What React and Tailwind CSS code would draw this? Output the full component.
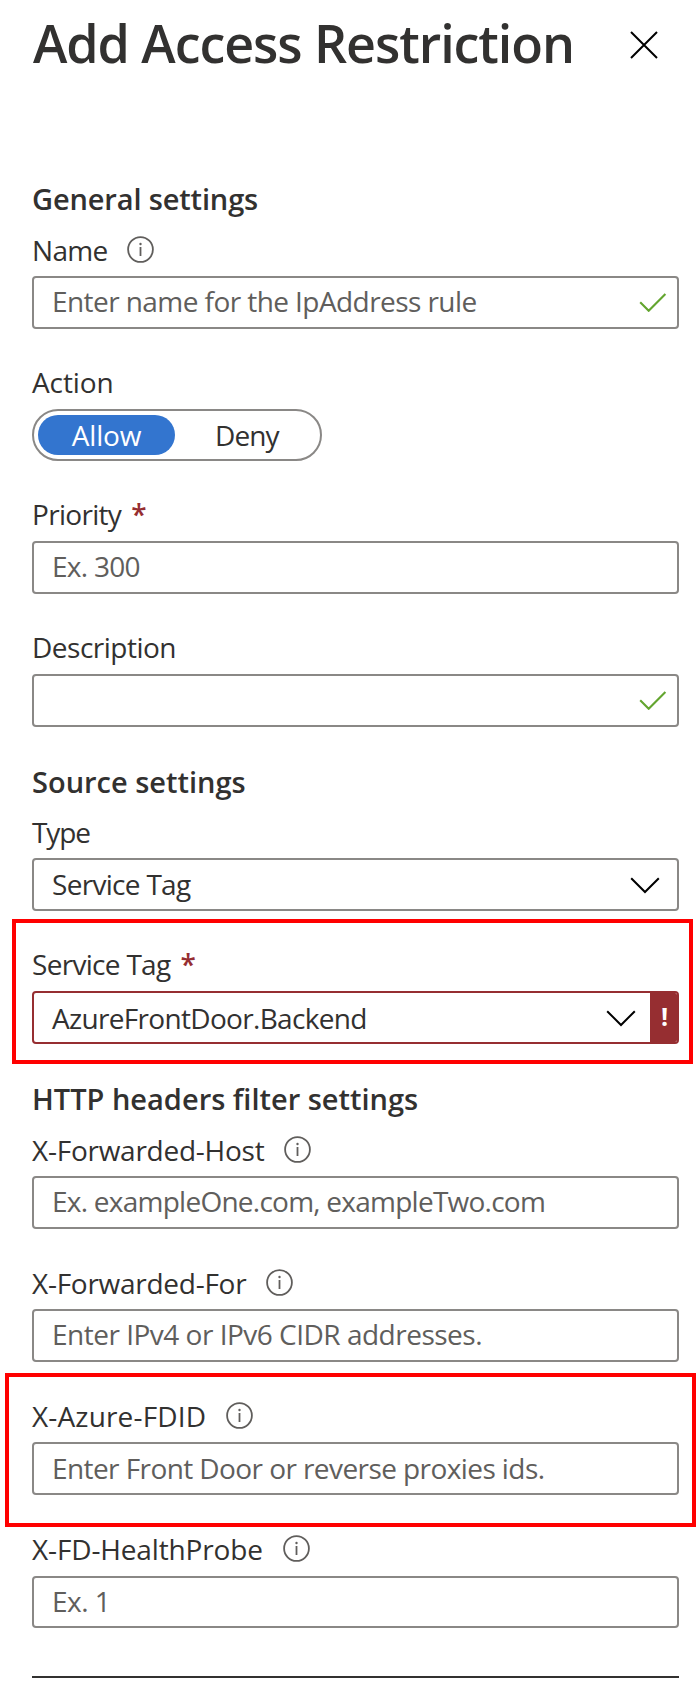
import React from "react";

function InfoIcon({ gap }) {
  return (
    <svg className={`mb-px h-[27px] w-[27px] shrink-0 ${gap}`} viewBox="0 0 27 27" fill="none">
      <circle cx="13.5" cy="13.5" r="12.4" stroke="#605e5c" strokeWidth="1.8" />
      <path d="M13.5 11v9" stroke="#605e5c" strokeWidth="1.8" />
      <circle cx="13.5" cy="8" r="1.2" fill="#605e5c" />
    </svg>
  );
}

function Check() {
  return (
    <svg className="mb-0.5 h-[20px] w-[28px] shrink-0" viewBox="0 0 28 20" fill="none">
      <path d="M1.2 10.3L9.7 18.8L26.4 2" stroke="#63a52f" strokeWidth="2.1" />
    </svg>
  );
}

function Chevron() {
  return (
    <svg className="h-[17px] w-[30px] shrink-0" viewBox="0 0 30 17" fill="none">
      <path d="M1.2 1.2L15 15L28.8 1.2" stroke="#000000" strokeWidth="2" />
    </svg>
  );
}

function Label({ children, spacing, required, info, gap = "ml-5" }) {
  return (
    <div className="flex h-10 items-center leading-10 whitespace-pre text-[#323130]">
      <span className={spacing}>{children}</span>
      {required && <span className="ml-[10px] font-semibold text-[#962e31]">*</span>}
      {info && <InfoIcon gap={gap} />}
    </div>
  );
}

function Heading({ children, spacing, className }) {
  return (
    <h2 className={`h-10 text-[29px] leading-[39px] font-semibold whitespace-pre text-[#323130] ${spacing} ${className}`}>{children}</h2>
  );
}

function Box({ children, spacing = "", value, className = "mt-1.5 h-[53px]", textClass = "pb-[3px]", end }) {
  return (
    <div className={`flex items-center justify-between rounded-[4px] border-2 border-[#8a8886] pl-[18px] ${className}`}>
      <span className={`leading-[46px] whitespace-pre ${textClass} ${value ? "text-[#323130]" : "text-[#605e5c]"} ${spacing}`}>
        {children}
      </span>
      {end}
    </div>
  );
}

export default function App() {
  return (
    <div className="h-[1697px] w-[700px] overflow-hidden bg-white font-['Open_Sans',sans-serif] text-[28px]">
      <header className="flex h-[88px] items-center justify-between pr-[42px] pl-8">
        <h1 className="pb-0.5 pl-px text-[52px] leading-[86px] font-semibold tracking-[-1.07px] whitespace-pre text-[#323130]">
          Add Access Restriction
        </h1>
        <svg className="mt-0.5 h-7 w-7" viewBox="0 0 28 28" fill="none">
          <path d="M1 1L27 27M27 1L1 27" stroke="#000000" strokeWidth="2" />
        </svg>
      </header>

      <main className="pt-[91px] pr-[21px] pl-8">
        <Heading spacing="tracking-[-0.14px]" className="">General settings</Heading>

        <div className="mt-[11px]">
          <Label spacing="tracking-[-0.69px]" info gap="ml-[19px]">Name</Label>
          <Box spacing="tracking-[-0.57px]" end={<div className="pr-[10px]"><Check /></div>}>
            Enter name for the IpAddress rule
          </Box>
        </div>

        <div className="mt-[33px]">
          <Label spacing="tracking-[-0.1px]">Action</Label>
          <div className="mt-[7px] flex h-[52px] w-[290px] items-center rounded-full border-2 border-[#8a8886] pl-1">
            <div className="flex h-10 w-[137px] justify-center rounded-full bg-[#3375cf] leading-10 tracking-[-0.17px] text-white">
              Allow
            </div>
            <div className="ml-[40px] leading-10 tracking-[-0.9px] text-[#323130]">Deny</div>
          </div>
        </div>

        <div className="mt-[33px]">
          <Label spacing="tracking-[-0.7px]" required>Priority</Label>
          <Box spacing="tracking-[-0.73px]" className="mt-[7px] h-[53px]">Ex. 300</Box>
        </div>

        <div className="mt-[33px]">
          <Label spacing="tracking-[-0.5px]">Description</Label>
          <Box className="mt-[7px] h-[53px]" end={<div className="pr-[10px]"><Check /></div>} />
        </div>

        <Heading spacing="tracking-[0px]" className="mt-[35px]">Source settings</Heading>

        <div className="mt-[10px]">
          <Label spacing="tracking-[-1.1px]">Type</Label>
          <Box value textClass="pb-px" spacing="tracking-[-0.7px]" end={<div className="pt-0.5 pr-[17px]"><Chevron /></div>}>Service Tag</Box>
        </div>

        <section className="-mr-[14px] -ml-5 mt-2 border-4 border-[#ff0000] pt-[21px] pr-[10px] pb-4 pl-4">
          <Label spacing="tracking-[-0.7px]" required>Service Tag</Label>
          <div className="mt-[7px] flex h-[53px] items-stretch overflow-hidden rounded-[4px] border-2 border-[#962e31] pl-[18px]">
            <span className="leading-[51px] tracking-[-0.68px] text-[#323130]">AzureFrontDoor.Backend</span>
            <div className="ml-auto flex items-center pt-0.5 pr-[14px]"><Chevron /></div>
            <div className="flex w-[27px] justify-center bg-[#962e31] pl-0.5 text-[25px] leading-[47px] font-bold text-white">!</div>
          </div>
        </section>

        <Heading spacing="tracking-[0px]" className="mt-[15px]">HTTP headers filter settings</Heading>

        <div className="mt-[11px]">
          <Label spacing="tracking-[-0.25px]" info>X-Forwarded-Host</Label>
          <Box spacing="tracking-[-0.75px]">Ex. exampleOne.com, exampleTwo.com</Box>
        </div>

        <div className="mt-[34px]">
          <Label spacing="tracking-[-0.27px]" info>X-Forwarded-For</Label>
          <Box spacing="tracking-[-0.5px]">Enter IPv4 or IPv6 CIDR addresses.</Box>
        </div>

        <section className="-mr-[17px] -ml-[27px] mt-[11px] border-4 border-[#ff0000] pt-[19px] pr-[13px] pb-7 pl-[23px]">
          <Label spacing="tracking-[0.16px]" info>X-Azure-FDID</Label>
          <Box textClass="pb-px" spacing="tracking-[-0.58px]">Enter Front Door or reverse proxies ids.</Box>
        </section>

        <div className="mt-0.5">
          <Label spacing="tracking-[-0.14px]" info>X-FD-HealthProbe</Label>
          <Box spacing="tracking-[-0.5px]" className="mt-[7px] h-[52px]">Ex. 1</Box>
        </div>

        <div className="mt-12 h-0.5 bg-[#323130]" />
      </main>
    </div>
  );
}
